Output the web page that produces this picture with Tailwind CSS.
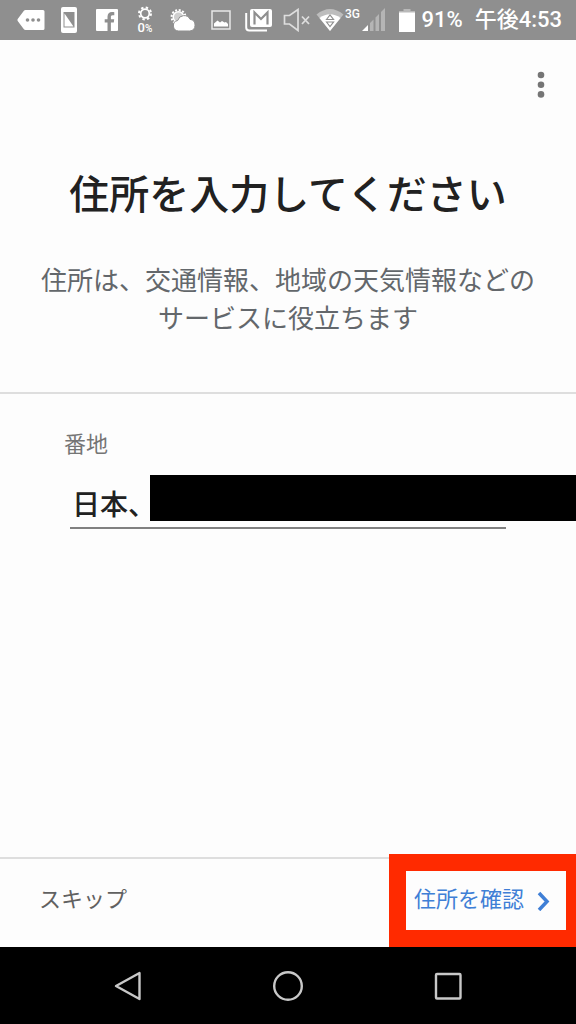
<!DOCTYPE html>
<html lang="ja">
<head>
  <meta charset="UTF-8" />
  <meta name="viewport" content="width=device-width, initial-scale=1.0"/>
  <title>住所を入力してください</title>
  <script src="https://cdn.jsdelivr.net/npm/@tailwindcss/browser@4"></script>
</head>
<body class="min-h-screen flex flex-col overflow-x-hidden bg-[#fdfdfd] font-['Noto_Sans_CJK_JP',sans-serif]">

  <!-- Status bar -->
  <div class="h-10 flex items-center justify-between bg-[#8f8f8f] pl-3 pr-[14px] text-white">
    <div class="flex items-center">
      <div class="w-[38px] flex justify-center">
        <svg width="28" height="22" viewBox="0 0 28 22" fill="#fff">
          <path d="M8.500 1H26q1.500 0 1.500 1.500v17q0 1.500-1.500 1.500H8.500q-1 0-1.600-.8L.7 12q-.6-1 0-2L6.900 1.800Q7.500 1 8.500 1z"/>
          <g fill="#8f8f8f"><circle cx="10.500" cy="11" r="1.800"/><circle cx="16" cy="11" r="1.800"/><circle cx="21.500" cy="11" r="1.800"/></g>
        </svg>
      </div>
      <div class="w-[38px] flex justify-center">
        <svg width="16" height="26" viewBox="0 0 16 26">
          <rect width="16" height="26" rx="2" fill="#fff"/>
          <rect x="2.500" y="5" width="11" height="15.500" fill="#8f8f8f"/>
          <path d="M3.500 19.500V6.500L12.500 19.500z" fill="#fff"/>
        </svg>
      </div>
      <div class="w-[38px] flex justify-center">
        <svg width="22" height="22" viewBox="0 0 22 22">
          <rect width="22" height="22" rx="1" fill="#fff"/>
          <path d="M11.500 22v-8.500H8.700v-3.300h2.800V7.800c0-3 1.700-4.700 4.500-4.700 1 0 1.900.1 2.300.2v3h-1.600c-1.500 0-1.800.7-1.800 1.700v2.200h3.300l-.4 3.300h-2.900V22z" fill="#8f8f8f"/>
        </svg>
      </div>
      <div class="w-[38px] flex flex-col items-center">
        <svg width="16" height="15" viewBox="0 0 16 15" fill="none" stroke="#fff">
          <circle cx="8" cy="7.500" r="4.300" stroke-width="1.700"/>
          <circle cx="8" cy="7.500" r="6" stroke-width="2" stroke-dasharray="2.400 2.312"/>
        </svg>
        <span class="text-[13px] leading-[13px] font-medium font-[Roboto]">0<span class="text-[10px]">%</span></span>
      </div>
      <div class="w-[38px] flex justify-center">
        <svg width="26" height="24" viewBox="0 0 26 24">
          <circle cx="8.500" cy="9" r="6.900" fill="none" stroke="#fff" stroke-width="2" stroke-dasharray="2 1.613"/>
          <circle cx="8.500" cy="9" r="5.300" fill="#cfcfcf" stroke="#fff" stroke-width="1.500"/>
          <path d="M8.500 23a5.300 5.300 0 0 1-.8-10.500 6.600 6.600 0 0 1 12.300-1.200A5.900 5.900 0 0 1 19.800 23z" fill="#fff" stroke="#8f8f8f"/>
        </svg>
      </div>
      <div class="w-[38px] flex justify-center">
        <svg width="20" height="20" viewBox="0 0 20 20">
          <rect x="1" y="1" width="18" height="18" fill="none" stroke="#e8e8e8" stroke-width="1.500"/>
          <path d="M3 16.500v-3l3.500-3 2.500 2 2-1.500 2.500 1.500 1.500-.5 2 2v2.500z" fill="#fff"/>
        </svg>
      </div>
      <div class="w-[38px] flex justify-center">
        <svg width="28" height="24" viewBox="0 0 28 24" fill="none" stroke="#fff">
          <path d="M1.200 5v14.500q0 3 3 3H22" stroke-width="2"/>
          <rect x="5" y="1" width="22" height="18" rx="2" fill="#fff" stroke="none"/>
          <path d="M9.500 16.500V4.500l6.500 6.500 6.500-6.500v12" stroke="#8f8f8f" stroke-width="2.200"/>
        </svg>
      </div>
      <div class="w-[38px] flex justify-center">
        <svg width="28" height="24" viewBox="0 0 28 24" fill="none" stroke="#dedede" stroke-width="1.700">
          <path d="M1.500 7.500h5L15 1.500v21L6.500 16h-5z"/>
          <path d="M19 8.500l7 7.500M26 8.500L19 16" stroke-width="1.800"/>
        </svg>
      </div>
      <svg width="28" height="24" viewBox="0 0 28 24">
        <path d="M14 23L.5 6.500Q14-4.500 27.500 6.500z" fill="#bdbdbd"/>
        <path d="M14 23L3.500 10Q14 2.500 24.500 10z" fill="#fff"/>
        <path d="M10.500 11.500l3.500-4.500 3.500 4.500zM10.500 14l3.500 4.500 3.500-4.500z" fill="#fff" stroke="#8f8f8f" stroke-width="1.200"/>
      </svg>
      <span class="w-[18px] pl-px pb-3 text-[12px] leading-3 font-medium font-[Roboto]">3G</span>
      <svg width="24" height="24" viewBox="0 0 24 24" fill="#b5b5b5">
        <path d="M0 23l6-6v6z" fill="#fff"/>
        <path d="M8 15l3.500-3.500V23H8zM13.500 9.500L17 6v17h-3.500zM19 4l4-4v23h-4z"/>
      </svg>
    </div>
    <div class="flex items-center font-[Roboto,'Noto_Sans_CJK_JP',sans-serif] text-[22px] leading-8 font-medium">
      <svg class="mr-[6px]" width="16" height="23" viewBox="0 0 16 23">
        <path d="M4.500 0h7v2H16v2H0V2h4.500z" fill="#b9b9b9"/>
        <path d="M0 3.500h16V23H0z" fill="#fff"/>
      </svg>
      <span class="mr-3">91%</span>
      <span>午後4:53</span>
    </div>
  </div>

  <!-- Heading -->
  <header class="border-b-2 border-[#dedede] pb-[54px]">
    <div class="flex justify-end pt-5 pr-[23px]">
      <button type="button" aria-label="メニュー" class="w-6 h-12 flex items-center justify-center">
        <svg width="8" height="28" viewBox="0 0 8 28" fill="#757575">
          <circle cx="4" cy="5" r="3.300"/><circle cx="4" cy="14.700" r="3.300"/><circle cx="4" cy="24.400" r="3.300"/>
        </svg>
      </button>
    </div>
    <h1 class="mt-14 text-center text-[40px] leading-[56px] text-[#212121] font-medium">住所を入力してください</h1>
    <p class="mt-10 mb-[2px] text-center text-[26px] leading-[38px] text-[#63676b]">住所は、交通情報、地域の天気情報などの<br>サービスに役立ちます</p>
  </header>

  <!-- Address form -->
  <main class="flex-1 pt-8 pl-16 pr-[70px]">
    <label for="address" class="block text-[22px] leading-8 text-[#757575]">番地</label>
    <div class="relative mt-4 ml-[6px]">
      <input id="address" type="text" value="日本、" class="block w-full h-[55px] border-b-2 border-[#808080] pt-1 pl-[2px] text-[28px] font-medium text-[#212121] outline-none" />
      <div class="absolute top-px left-20 -right-[70px] h-[46px] bg-black"></div>
    </div>
  </main>

  <!-- Actions -->
  <footer class="relative flex justify-between border-t-2 border-[#dedede] pt-[22px] pb-[34px] pl-[39px] pr-6 text-[22px] leading-8">
    <button type="button" class="text-[#616161]">スキップ</button>
    <button type="button" class="flex items-center text-[#3f7fd6]">
      住所を確認
      <svg class="ml-3 mt-2" width="16" height="20" viewBox="0 0 16 20" fill="none" stroke="#3f7fd6" stroke-width="3.500">
        <path d="M3 2l8 8.500-8 8.500"/>
      </svg>
    </button>
    <div class="absolute -top-[5px] right-0 bottom-0 w-[187px] border-[17px] border-r-[10px] border-[#ff2a00] pointer-events-none"></div>
  </footer>

  <!-- Navigation bar -->
  <nav class="h-[77px] flex items-center justify-center gap-32 bg-black">
    <button type="button" aria-label="戻る">
      <svg width="32" height="32" viewBox="0 0 32 32" fill="none" stroke="#c8c8c8" stroke-width="2.400" stroke-linejoin="round">
        <path d="M27.500 3v26L4 16z"/>
      </svg>
    </button>
    <button type="button" aria-label="ホーム">
      <svg width="32" height="32" viewBox="0 0 32 32" fill="none" stroke="#c8c8c8" stroke-width="2.400">
        <circle cx="16" cy="16" r="13.800"/>
      </svg>
    </button>
    <button type="button" aria-label="アプリ履歴">
      <svg width="32" height="32" viewBox="0 0 32 32" fill="none" stroke="#c8c8c8" stroke-width="2.400">
        <rect x="4" y="4" width="24.500" height="24.500" rx="1"/>
      </svg>
    </button>
  </nav>
</body>
</html>
